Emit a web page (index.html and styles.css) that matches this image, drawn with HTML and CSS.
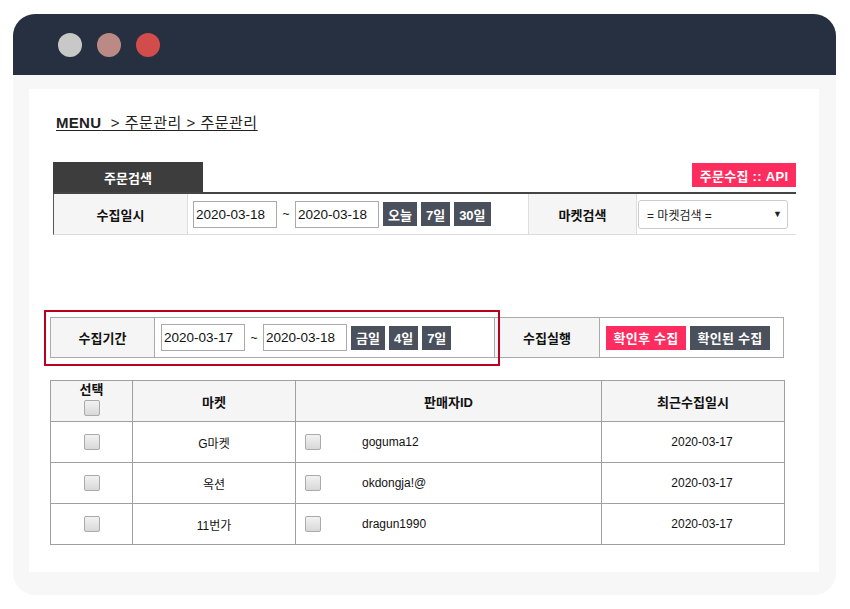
FILE: index.html
```html
<!DOCTYPE html>
<html lang="ko">
<head>
<meta charset="utf-8">
<link rel="stylesheet" href="styles.css">
</head>
<body>
<div class="window">
  <div class="titlebar">
    <span class="dot d1"></span><span class="dot d2"></span><span class="dot d3"></span>
  </div>
  <div class="frame">
    <div class="panel">
      <div class="crumb"><span class="menu">MENU</span>&nbsp; &gt; 주문관리 &gt; 주문관리</div>

      <div class="search">
        <div class="search-head">
          <div class="tab">주문검색</div>
          <div class="api">주문수집 :: API</div>
        </div>
        <div class="search-row">
          <div class="lab l1">수집일시</div>
          <div class="cell c1">
            <span class="inp">2020-03-18</span><span class="tilde">~</span><span class="inp">2020-03-18</span>
            <span class="btn">오늘</span><span class="btn">7일</span><span class="btn">30일</span>
          </div>
          <div class="lab l2">마켓검색</div>
          <div class="cell c2">
            <div class="sel"><span>= 마켓검색 =</span><span class="arr">▼</span></div>
          </div>
        </div>
      </div>

      <div class="collect">
        <div class="hl"></div>
        <div class="crow">
          <div class="lab cl1">수집기간</div>
          <div class="cell cc1">
            <span class="inp">2020-03-17</span><span class="tilde">~</span><span class="inp">2020-03-18</span>
            <span class="btn">금일</span><span class="btn">4일</span><span class="btn">7일</span>
          </div>
          <div class="lab cl2">수집실행</div>
          <div class="cell cc2">
            <span class="btn pink wide">확인후 수집</span><span class="btn wide">확인된 수집</span>
          </div>
        </div>
      </div>

      <table class="list">
        <colgroup><col class="w1"><col class="w2"><col class="w3"><col class="w4"></colgroup>
        <thead>
          <tr>
            <th class="selcol"><div class="seltxt">선택</div><span class="chk"></span></th>
            <th>마켓</th>
            <th>판매자ID</th>
            <th>최근수집일시</th>
          </tr>
        </thead>
        <tbody>
          <tr><td class="ctr"><span class="chk"></span></td><td class="ctr">G마켓</td><td class="id"><span class="chk"></span><span class="idt">goguma12</span></td><td class="dt">2020-03-17</td></tr>
          <tr><td class="ctr"><span class="chk"></span></td><td class="ctr">옥션</td><td class="id"><span class="chk"></span><span class="idt">okdongja!@</span></td><td class="dt">2020-03-17</td></tr>
          <tr><td class="ctr"><span class="chk"></span></td><td class="ctr">11번가</td><td class="id"><span class="chk"></span><span class="idt">dragun1990</span></td><td class="dt">2020-03-17</td></tr>
        </tbody>
      </table>
    </div>
  </div>
</div>
</body>
</html>
```

FILE: styles.css
```css
* { box-sizing: border-box; }
html, body { margin: 0; padding: 0; background: #fff; }
body {
  font-family: "Liberation Sans", "Noto Sans CJK KR", sans-serif;
  color: #111;
  font-size: 12px;
}
.window {
  margin: 14px 0 0 13px;
  width: 823px;
  border-radius: 22px;
  overflow: hidden;
}
.titlebar {
  height: 61px;
  background: #263040;
  display: flex;
  gap: 15px;
  padding: 19px 0 0 45px;
}
.dot { width: 24px; height: 24px; border-radius: 50%; display: block; }
.d1 { background: #c8c8c8; }
.d2 { background: #bc8a84; }
.d3 { background: #d24c4c; }
.frame {
  background: #f7f7f7;
  padding: 14px 17px 23px 16px;
}
.panel {
  background: #fff;
  height: 483px;
  padding: 24px 0 0 21px;
}
.crumb {
  font-size: 15px;
  line-height: 20px;
  color: #222;
  text-decoration: underline;
  text-underline-offset: 2px;
  margin-left: 6px;
  display: inline-block;
  letter-spacing: 0.5px;
}
.menu { font-weight: bold; letter-spacing: 0.3px; }
.search {
  margin: 29px 0 0 3px;
  width: 743px;
}
.search-head {
  display: flex;
  justify-content: space-between;
  align-items: flex-start;
  height: 30px;
  border-bottom: 2px solid #444;
  box-sizing: content-box;
}
.tab {
  width: 150px;
  height: 30px;
  background: #3d3d3d;
  color: #fff;
  font-weight: bold;
  font-size: 13px;
  display: flex;
  align-items: center;
  justify-content: center;
}
.api {
  margin-top: 1px;
  height: 24px;
  width: 104px;
  background: #ff2d5f;
  color: #fff;
  font-weight: bold;
  font-size: 13px;
  letter-spacing: 0.3px;
  display: flex;
  align-items: center;
  justify-content: center;
  white-space: nowrap;
}
.search-row {
  display: flex;
  height: 41px;
  border-bottom: 1px solid #ddd;
  border-left: 1px solid #555;
}
.lab {
  background: #f5f5f5;
  font-weight: bold;
  font-size: 13px;
  display: flex;
  align-items: center;
  justify-content: center;
}
.cell { display: flex; align-items: center; }
.l1 { width: 134px; border-right: 1px solid #ddd; }
.c1 { width: 341px; padding-left: 5px; border-right: 1px solid #ddd; }
.l2 { width: 108px; border-right: 1px solid #ddd; }
.c2 { flex: 1; padding-left: 1px; }
.inp {
  width: 84px;
  height: 27px;
  border: 1px solid #aaa;
  font-size: 13.5px;
  padding-left: 2px;
  display: flex;
  align-items: center;
  color: #111;
}
.tilde { width: 18px; text-align: center; font-size: 12px; }
.btn {
  height: 24px;
  background: #4a505c;
  color: #fff;
  font-weight: bold;
  font-size: 13px;
  padding: 0 5px;
  display: flex;
  align-items: center;
  justify-content: center;
  margin-left: 4px;
  white-space: nowrap;
}
.sel {
  width: 150px;
  height: 29px;
  border: 1px solid #ccc;
  border-radius: 3px;
  display: flex;
  align-items: center;
  justify-content: space-between;
  padding: 0 5px 0 8px;
  font-size: 12px;
  color: #222;
}
.arr { font-size: 9px; color: #222; }

.collect {
  position: relative;
  margin-top: 82px;
  width: 734px;
}
.hl {
  position: absolute;
  left: -6px;
  top: -7px;
  width: 456px;
  height: 56px;
  border: 2px solid #b8001f;
}
.crow {
  display: flex;
  height: 41px;
  border: 1px solid #aaa;
}
.cl1 { width: 104px; border-right: 1px solid #aaa; }
.cc1 { width: 340px; padding-left: 6px; border-right: 1px solid #aaa; }
.cl2 { width: 105px; border-right: 1px solid #aaa; }
.cc2 { flex: 1; padding-left: 2px; }
.pink { background: #ff2d5f; }
.wide { width: 80px; padding: 0; letter-spacing: 0.3px; }

.list {
  margin-top: 22px;
  width: 734px;
  border-collapse: collapse;
  table-layout: fixed;
  border: 1px solid #999;
}
.w1 { width: 82px; }
.w2 { width: 163px; }
.w3 { width: 306px; }
.w4 { width: 183px; }
.list th, .list td {
  border: 1px solid #a0a0a0;
  height: 41px;
  padding: 0;
}
.list th {
  background: #f5f5f5;
  font-weight: bold;
  font-size: 13px;
  text-align: center;
}
.selcol { vertical-align: top; padding-top: 1px !important; }
.seltxt { line-height: 15px; margin-bottom: 2px; }
.chk {
  display: inline-block;
  width: 16px;
  height: 16px;
  border: 1px solid #aaa;
  border-radius: 2px;
  background: linear-gradient(#f2f2f2, #d8d8d8);
  vertical-align: middle;
}
.ctr { text-align: center; font-size: 12px; }
.id { padding-left: 9px !important; font-size: 12px; }
.id .chk { margin-right: 41px; }
.idt { vertical-align: middle; }
.dt { text-align: center; padding-left: 18px !important; font-size: 12px; }
```
